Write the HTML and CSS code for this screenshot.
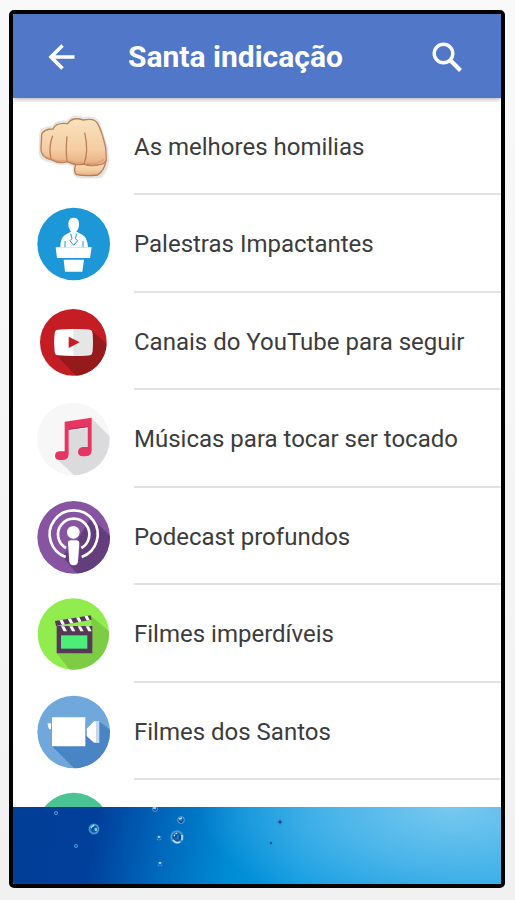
FILE: index.html
```html
<!DOCTYPE html>
<html lang="pt-BR">
<head>
<meta charset="utf-8">
<meta name="viewport" content="width=device-width, initial-scale=1">
<title>Santa indicação</title>
<link rel="stylesheet" href="styles.css">
</head>
<body>
<div class="screen">
  <header class="bar">
    <button class="bar-button" type="button" aria-label="Voltar">
      <svg class="bar-icon" viewBox="0 0 32 32" fill="none" stroke="#fff" stroke-width="3.600"><path d="M29.500 16H6M17.500 4.500L6 16l11.500 11.500"/></svg>
    </button>
    <h1 class="title">Santa indicação</h1>
    <button class="bar-button" type="button" aria-label="Buscar">
      <svg class="bar-icon" viewBox="0 0 32 32" fill="none" stroke="#fff"><circle cx="12.500" cy="12.500" r="9.300" stroke-width="3.400"/><path d="M19 19l10.500 10.500" stroke-width="4.200"/></svg>
    </button>
  </header>

  <main class="content">
    <ul class="list">
      <li class="row">
        <svg class="icon" viewBox="31 24 228 228" aria-hidden="true">
          <defs>
            <linearGradient id="skin" x1="0" y1="0" x2="0" y2="1"><stop offset="0" stop-color="#fae2bd"/><stop offset=".65" stop-color="#f5cda4"/><stop offset="1" stop-color="#e8ad82"/></linearGradient>
          </defs>
          <path d="M48 98Q54 80 84 82Q92 61 126 66Q143 42 174 55Q207 50 216 66L240 140L244 178Q240 210 224 223Q185 228 155 223Q144 215 150 193Q137 190 124 183Q100 188 78 178Q44 174 46 148Z" fill="#fff" stroke="#e3e5e6" stroke-width="14" stroke-linejoin="round"/>
          <path d="M150 190Q143 212 152 221Q184 226 216 222Q237 208 241 178L228 175Z" fill="url(#skin)" stroke="#b77d55" stroke-width="4"/>
          <path d="M48 100Q54 84 82 84Q91 63 126 68Q140 46 173 57Q208 50 216 68Q229 91 240 140L242 176Q239 191 215 192Q194 196 174 189Q149 195 124 182Q102 190 76 176Q46 170 46 145Z" fill="url(#skin)" stroke="#bb8257" stroke-width="4"/>
          <path d="M81 104Q68 135 76 176M124 106Q120 149 124 182M177 95Q190 152 175 189" fill="none" stroke="#bc8059" stroke-width="4"/>
          <path d="M51 155Q54 171 75 171M80 174Q98 183 118 178M129 180Q149 188 170 184M182 186Q220 190 235 174" fill="none" stroke="#d99668" stroke-width="5" opacity=".55"/>
        </svg>
        <span class="label">As melhores homilias</span>
      </li>
      <li class="row">
        <svg class="icon" viewBox="34 33 228 228" aria-hidden="true">
          <circle cx="147" cy="147" r="109" fill="#1c98d8"/>
          <g fill="#fff">
            <path d="M147 68C162 68 165 82 162 96Q158 112 147 114Q136 112 132 96C129 82 132 68 147 68Z"/>
            <path d="M107 157Q107 126 122 119L139 110H156L173 119Q188 126 190 157Z"/>
            <path d="M93 157H201L196 189H97Z"/>
            <path d="M117 194H178L173 230H121Z"/>
          </g>
          <path d="M121 157V138M175 157V138M138 116L142 131L136 137L147 151L159 137L152 131L156 116" fill="none" stroke="#1c98d8" stroke-width="3"/>
        </svg>
        <span class="label">Palestras Impactantes</span>
      </li>
      <li class="row">
        <svg class="icon" viewBox="34 30 228 228" aria-hidden="true">
          <clipPath id="clip-video"><circle cx="146" cy="145" r="100"/></clipPath>
          <circle cx="146" cy="145" r="100" fill="#c51d24"/>
          <path d="M90 178L158 250H255V158L203 110V184Z" fill="#96191c" clip-path="url(#clip-video)"/>
          <path d="M99 107Q146 103 193 107Q203 108 203 118Q206 145 203 173Q202 183 193 184Q146 188 99 184Q91 183 90 173Q86 145 90 118Q91 108 99 107Z" fill="#fff"/>
          <path d="M146 105Q171 105 193 107Q203 108 203 118Q206 145 203 173Q202 183 193 184Q171 186 146 186Z" fill="#e5e7e7"/>
          <path d="M132 128L165 145L132 162Z" fill="#c51d24"/>
        </svg>
        <span class="label">Canais do YouTube para seguir</span>
      </li>
      <li class="row">
        <svg class="icon" viewBox="34 33 228 228" aria-hidden="true">
          <clipPath id="clip-music"><circle cx="146" cy="147" r="109"/></clipPath>
          <circle cx="146" cy="147" r="109" fill="#f7f7f7"/>
          <path d="M200 84L270 154V270H164L96 207L132 200V122L188 115V190Z" fill="#dbdbdd" clip-path="url(#clip-music)"/>
          <path d="M120 95L201 83V181Q201 198 184 199H174Q160 198 160 186Q161 173 174 171H189V111L132 119V193Q131 209 116 210H104Q91 209 91 198Q91 185 104 184H120Z" fill="#e63560"/>
          <path d="M132 118L189 110" stroke="#bd2a50" stroke-width="3"/>
        </svg>
        <span class="label">Músicas para tocar ser tocado</span>
      </li>
      <li class="row">
        <svg class="icon" viewBox="34 31 228 228" aria-hidden="true">
          <clipPath id="clip-podcast"><circle cx="147" cy="146" r="109"/></clipPath>
          <circle cx="147" cy="146" r="109" fill="#8754a2"/>
          <path d="M199 86L275 160V270H170L132 226L112 202L160 150Z" fill="#643d7d" clip-path="url(#clip-podcast)"/>
          <g fill="none" stroke="#fff" stroke-width="8">
            <path d="M123 205A72 72 0 1 1 171 205"/>
            <path d="M124 178A47 47 0 1 1 170 178"/>
          </g>
          <path d="M126 166L134 230H160L168 166Z" fill="#7a4b95"/>
          <circle cx="146" cy="131" r="19" fill="#fff"/>
          <path d="M130 163Q130 155 139 155H155Q164 155 164 163L160 218Q159 230 147 230Q135 230 134 218Z" fill="#fff"/>
        </svg>
        <span class="label">Podecast profundos</span>
      </li>
      <li class="row">
        <svg class="icon" viewBox="34 30 228 228" aria-hidden="true">
          <clipPath id="clip-clapper"><circle cx="146" cy="144" r="107"/></clipPath>
          <clipPath id="clip-arm"><path d="M91 105L198 88L201 101L94 120Z"/></clipPath>
          <circle cx="146" cy="144" r="107" fill="#91ed4e"/>
          <path d="M199 89L270 150V270H150L96 202L203 200Z" fill="#7dcc43" clip-path="url(#clip-clapper)"/>
          <path d="M91 105L198 88L201 101L94 120Z" fill="#553857"/>
          <path d="M106 96L119 121M131 92L144 117M156 88L169 113M181 84L194 109" stroke="#fff" stroke-width="9" clip-path="url(#clip-arm)"/>
          <path d="M96 120H203V202H96Z" fill="#553857"/>
          <path d="M109 121H119L127 136H117ZM134 121H144L152 136H142ZM159 121H169L177 136H167ZM183 121H193L201 136H191Z" fill="#fff"/>
          <path d="M109 148H188V188H109Z" fill="#4bee79"/>
        </svg>
        <span class="label">Filmes imperdíveis</span>
      </li>
      <li class="row">
        <svg class="icon" viewBox="34 28 228 228" aria-hidden="true">
          <clipPath id="clip-camera"><circle cx="147" cy="142" r="109"/></clipPath>
          <circle cx="147" cy="142" r="109" fill="#70a8dc"/>
          <path d="M82 184L155 258H265V142L222 109L185 140L181 98Z" fill="#4985c4" clip-path="url(#clip-camera)"/>
          <path d="M82 98H182V185H82Z" fill="#fff"/>
          <path d="M69 116H79V134H76Q69 130 69 116Z" fill="#fff"/>
          <path d="M186 132L208 110H216V174H208L186 154Z" fill="#fff"/>
          <path d="M216 109H224V175H216Z" fill="#c6d9ea"/>
        </svg>
        <span class="label">Filmes dos Santos</span>
      </li>
      <li class="row">
        <svg class="icon" viewBox="34 33 228 228" aria-hidden="true"><circle cx="147" cy="147" r="109" fill="#49c492"/></svg>
        <span class="label"></span>
      </li>
    </ul>
  </main>

  <footer class="water">
    <svg class="bubbles" viewBox="0 0 488 77" preserveAspectRatio="xMinYMin slice" aria-hidden="true">
      <defs>
        <radialGradient id="bubble"><stop offset="0" stop-color="#2c8fd2"/><stop offset=".5" stop-color="#0b4fa3"/><stop offset=".8" stop-color="#4b9edb"/><stop offset="1" stop-color="#2781c5"/></radialGradient>
      </defs>
      <g fill="url(#bubble)">
        <circle cx="81" cy="22" r="5.500"/>
        <circle cx="164" cy="30" r="7"/>
        <circle cx="168" cy="13" r="4"/>
        <circle cx="146" cy="31" r="2.500"/>
        <circle cx="147" cy="57" r="2.500"/>
        <circle cx="142" cy="2" r="3"/>
        <circle cx="43" cy="6" r="2"/>
        <circle cx="63" cy="39" r="2"/>
        <circle cx="267" cy="15" r="2.500"/>
        <circle cx="258" cy="36" r="1.500"/>
      </g>
      <path d="M78 21l3-3M83 24v-3M161 29l3-3M169 33v-5M160 33q3 4 7 2M166 12l3-1M145 30h2M146 56h2M140 1h3" fill="none" stroke="#c4e1f5" stroke-width="1.500"/>
      <path d="M80 20v3M163 27v4M167 29v3M169 15h-2M266 15h2" fill="none" stroke="#063b84" stroke-width="1.500"/>
    </svg>
  </footer>
</div>
</body>
</html>
```
FILE: styles.css
```css
* {
  box-sizing: border-box;
}

body {
  margin: 0;
  padding: 10px 10px 12px 9px;
  height: 100vh;
  background: linear-gradient(#f9f9f9, #f1f1f1);
  font-family: Roboto, "Liberation Sans", sans-serif;
}

.screen {
  display: flex;
  flex-direction: column;
  height: 100%;
  overflow: hidden;
  border: 4px solid #000;
  border-radius: 5px;
  background: #fff;
}

.bar {
  display: flex;
  align-items: center;
  flex: none;
  height: 84px;
  padding: 2px 38px 0 32px;
  background: #5077c8;
  box-shadow: 0 1px 5px rgba(0, 0, 0, 0.35);
  position: relative;
}

.bar-button {
  display: flex;
  padding: 0;
  border: 0;
  background: none;
  cursor: pointer;
}

.bar-icon {
  width: 32px;
  height: 32px;
}

.title {
  flex: 1;
  margin: 0;
  padding-left: 51px;
  color: #fff;
  font-size: 30px;
  font-weight: 700;
  line-height: 36px;
}

.content {
  flex: 1;
  min-height: 0;
  overflow: hidden;
}

.list {
  margin: 0;
  padding: 0;
  list-style: none;
}

.row {
  display: flex;
  align-items: center;
  gap: 22px;
  height: 97px;
  padding-left: 23px;
}

.row:nth-child(even) {
  height: 98px;
}

.icon {
  flex: none;
  width: 76px;
  height: 76px;
}

.label {
  display: flex;
  align-items: center;
  flex: 1;
  align-self: stretch;
  padding-top: 2px;
  border-bottom: 2px solid #e2e2e2;
  color: #3c3c3c;
  font-size: 24px;
  white-space: nowrap;
}

.water {
  flex: none;
  height: 77px;
  background:
    radial-gradient(ellipse 52% 150% at 90% 0, rgba(130, 205, 240, 0.9), rgba(110, 195, 238, 0.6) 50%, rgba(90, 185, 235, 0)),
    linear-gradient(100deg, #003e97 0%, #003f9b 17%, #0068bb 31%, #008bd5 45%, #0c9ae0 60%, #1da3e4 100%);
}

.bubbles {
  display: block;
  width: 100%;
  height: 100%;
}
```
